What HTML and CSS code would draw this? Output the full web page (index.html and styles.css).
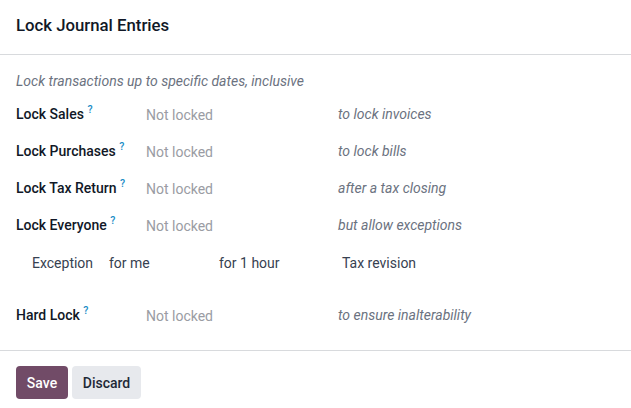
FILE: index.html
```html
<!DOCTYPE html>
<html>
<head>
<meta charset="utf-8">
<link rel="stylesheet" href="styles.css">
</head>
<body>
<div class="dialog">
  <header class="head">
    <h4 class="title">Lock Journal Entries</h4>
  </header>
  <main class="body">
    <p class="desc">Lock transactions up to specific dates, inclusive</p>
    <div class="row">
      <div class="label">Lock Sales <sup class="help">?</sup></div>
      <div class="value">Not locked</div>
      <div class="note">to lock invoices</div>
    </div>
    <div class="row">
      <div class="label">Lock Purchases <sup class="help">?</sup></div>
      <div class="value">Not locked</div>
      <div class="note">to lock bills</div>
    </div>
    <div class="row">
      <div class="label">Lock Tax Return <sup class="help">?</sup></div>
      <div class="value">Not locked</div>
      <div class="note">after a tax closing</div>
    </div>
    <div class="row">
      <div class="label">Lock Everyone <sup class="help">?</sup></div>
      <div class="value">Not locked</div>
      <div class="note">but allow exceptions</div>
    </div>
    <div class="row exc">
      <div class="exc-label">Exception</div>
      <div class="exc-who">for me</div>
      <div class="exc-dur">for 1 hour</div>
      <div class="exc-reason">Tax revision</div>
    </div>
    <div class="row hard">
      <div class="label">Hard Lock <sup class="help">?</sup></div>
      <div class="value">Not locked</div>
      <div class="note">to ensure inalterability</div>
    </div>
  </main>
  <footer class="foot">
    <button class="btn btn-primary">Save</button>
    <button class="btn btn-secondary">Discard</button>
  </footer>
</div>
</body>
</html>
```
FILE: styles.css
```css
html, body {
  margin: 0;
  padding: 0;
  background: #fff;
}
body {
  font-family: Roboto, "Liberation Sans", sans-serif;
  font-size: 14px;
  color: #374151;
}
.dialog {
  width: 631px;
}
.head {
  padding: 14px 16px 18px;
  border-bottom: 1px solid #d8dadd;
}
.title {
  margin: 0;
  font-size: 16.75px;
  font-weight: 500;
  line-height: 22px;
  color: #111827;
}
.body {
  padding: 16px 16px 16px;
  border-bottom: 1px solid #d8dadd;
}
.desc {
  margin: 0 0 4px;
  line-height: 21px;
  font-style: italic;
  color: #6b7280;
}
.row {
  display: flex;
  align-items: center;
  height: 37px;
}
.label {
  width: 130px;
  font-weight: 500;
  color: #111827;
  line-height: 21px;
}
.help {
  color: #1a8cc6;
  font-size: 10.5px;
  font-weight: 500;
  vertical-align: top;
  position: relative;
  top: -5px;
}
.value {
  width: 192px;
  color: #9a9ca3;
  line-height: 21px;
  padding-top: 2px;
}
.note {
  font-style: italic;
  color: #6b7280;
  line-height: 21px;
}
.row.exc {
  height: 38px;
  padding-left: 16px;
}
.exc-label { width: 77px; }
.exc-who { width: 110px; }
.exc-dur { width: 123px; }
.row.hard {
  margin-top: 15px;
}
.foot {
  display: flex;
  gap: 4px;
  padding: 15px 16px;
}
.btn {
  font-family: Roboto, "Liberation Sans", sans-serif;
  font-size: 14px;
  font-weight: 500;
  height: 33px;
  border: none;
  border-radius: 4px;
  padding: 0;
  cursor: pointer;
}
.btn-primary {
  background: #714b67;
  color: #fff;
  width: 52px;
}
.btn-secondary {
  background: #e7e9ed;
  color: #1f2937;
  width: 69px;
}
```
